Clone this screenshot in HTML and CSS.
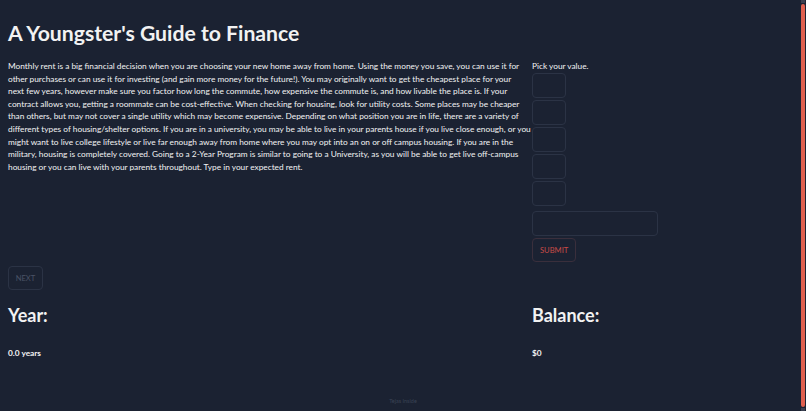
FILE: index.html
```html
<!DOCTYPE html>
<html>

<head>
    <meta name="viewport" content="width=device-width,initial-scale=1.0">
    <title>A Youngster's Guide to Finance</title>
    <link rel="stylesheet" href="styles.css">
</head>

<body>
    <h1 class="title">A Youngster's Guide to Finance</h1>

    <div class="split">
        <p class="lesson">
            Monthly rent is a big financial decision when you are choosing your new home away from home. Using the money you save, you can use it for<br>
            other purchases or can use it for investing (and gain more money for the future!). You may originally want to get the cheapest place for your<br>
            next few years, however make sure you factor how long the commute, how expensive the commute is, and how livable the place is. If your<br>
            contract allows you, getting a roommate can be cost-effective. When checking for housing, look for utility costs. Some places may be cheaper<br>
            than others, but may not cover a single utility which may become expensive. Depending on what position you are in life, there are a variety of<br>
            different types of housing/shelter options. If you are in a university, you may be able to live in your parents house if you live close enough, or you<br>
            might want to live college lifestyle or live far enough away from home where you may opt into an on or off campus housing. If you are in the<br>
            military, housing is completely covered. Going to a 2-Year Program is similar to going to a University, as you will be able to get live off-campus<br>
            housing or you can live with your parents throughout. Type in your expected rent.
        </p>

        <form class="picker" action="">
            <label class="picker-label">Pick your value.</label>
            <input class="choice" autocomplete="off" />
            <input class="choice" autocomplete="off" />
            <input class="choice" autocomplete="off" />
            <input class="choice" autocomplete="off" />
            <input class="choice" autocomplete="off" />
            <input class="rent" autocomplete="off" />
            <button class="submit-btn">Submit</button>
        </form>
    </div>

    <button class="next-btn" disabled>Next</button>

    <div class="split stats">
        <div>
            <h2>Year:</h2>
            <p class="stat-value">0.0 years</p>
        </div>
        <div>
            <h2>Balance:</h2>
            <p class="stat-value">$0</p>
        </div>
    </div>

    <footer class="credit">Tejas Inside</footer>

    <!-- themed scrollbar, painted over the right edge -->
    <div class="scroll-rail">
        <span class="rail-cap"></span>
        <span class="rail-thumb"></span>
        <span class="rail-cap"></span>
    </div>
</body>

</html>
```

FILE: styles.css
```css
html {
    background: #1b2232;
}

body {
    margin: 0;
    padding: 8px 8px 0;
    height: 411px;
    box-sizing: border-box;
    overflow: hidden;
    color: #f2f2f2;
    font-family: Lato, "Open Sans", sans-serif;
    font-size: 8.3px;
    line-height: 12.6px;
}

.title {
    margin: 12px 0 14px;
    font-size: 21.2px;
    line-height: 26px;
    font-weight: 700;
}

.split {
    display: grid;
    grid-template-columns: 522px 1fr;
    column-gap: 2px;
}

.lesson {
    margin: 0;
    white-space: nowrap;
}

.picker {
    display: flex;
    flex-direction: column;
    align-items: flex-start;
}

.picker input {
    box-sizing: border-box;
    background: transparent;
    border: 1px solid #2b3345;
    border-radius: 4px;
    color: #f2f2f2;
    outline: none;
}

.choice {
    width: 34px;
    height: 25px;
    margin-bottom: 2px;
}

.rent {
    width: 126px;
    height: 25px;
    margin-top: 3px;
}

.picker button,
.next-btn {
    box-sizing: border-box;
    height: 24px;
    padding: 0 7px;
    background: transparent;
    border: 1px solid #2b3345;
    border-radius: 4px;
    font-family: Lato, "Open Sans", sans-serif;
    font-size: 7.6px;
    text-transform: uppercase;
}

.picker .submit-btn {
    margin-top: 2px;
    color: #c84b47;
    border-color: #3a2f3c;
}

.next-btn {
    display: block;
    margin-top: 4px;
    width: 35px;
    padding: 0;
    color: #4a5265;
}

.stats {
    margin-top: 15px;
}

.stats h2 {
    margin: 0 0 21px;
    font-size: 18px;
    line-height: 21.6px;
    font-weight: 700;
}

.stat-value {
    margin: 0;
    font-weight: 700;
}

.credit {
    margin-top: 35px;
    text-align: center;
    font-size: 5.5px;
    color: #3a4255;
}

.scroll-rail {
    position: fixed;
    top: 0;
    right: 0;
    bottom: 0;
    width: 6px;
    display: flex;
    flex-direction: column;
    align-items: center;
    background: #1b2232;
}

.rail-cap {
    width: 4px;
    height: 3px;
    background: #3b4050;
}

.rail-thumb {
    flex: 1;
    width: 4px;
    margin: 1px 0;
    border-radius: 2px;
    background: #e0604f;
}
```
